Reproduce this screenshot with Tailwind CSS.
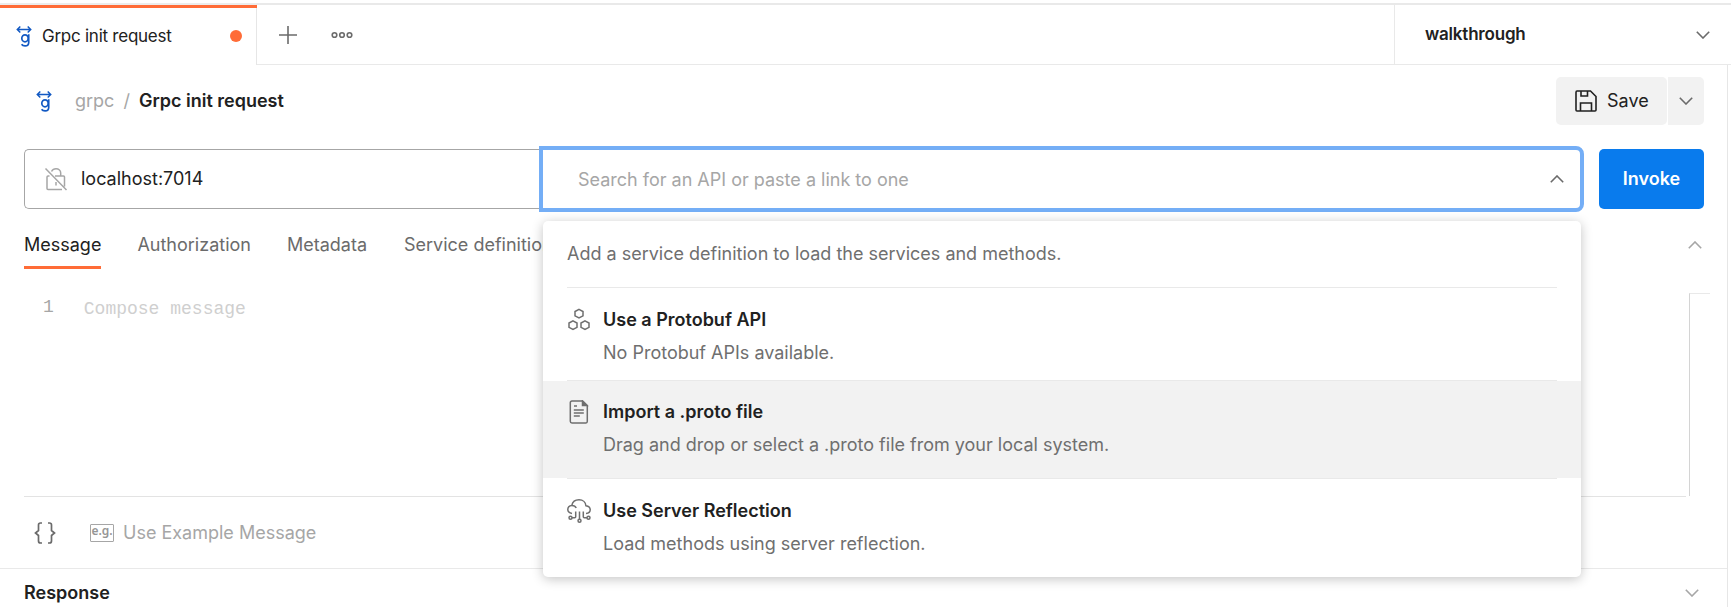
<!DOCTYPE html>
<html lang="en">
<head>
<meta charset="utf-8">
<title>Grpc init request</title>
<script src="https://cdn.jsdelivr.net/npm/@tailwindcss/browser@4"></script>
</head>
<body class="bg-white font-['Inter',sans-serif] text-[18px] leading-6 text-[#212121]">
<svg class="hidden">
  <symbol id="grpc" viewBox="0 0 16 22" fill="none" stroke="#1259c3"><path stroke-width="1.500" d="M1.600 4.500h12.800M4.300 1.500l-3 3 3 3M11.700 1.500l3 3-3 3"/><ellipse cx="9" cy="13.300" rx="3.200" ry="3.500" stroke-width="1.700"/><path stroke-width="1.700" d="M12.700 9.200v8.300c0 2.300-1.300 3.400-3.600 3.400-1.600 0-2.800-.5-3.500-1.700"/></symbol>
  <symbol id="down" viewBox="0 0 14 8" fill="none" stroke="currentColor" stroke-width="1.600"><path d="M.8.8L7 7 13.200.8"/></symbol>
  <symbol id="up" viewBox="0 0 14 8" fill="none" stroke="currentColor" stroke-width="1.600"><path d="M.8 7.200L7 1l6.200 6.200"/></symbol>
</svg>
<div class="relative flex h-[607px] w-[1731px] flex-col overflow-hidden">
  <header class="flex h-[65px] shrink-0 pt-[3px]">
    <div class="flex w-[257px] flex-col border-t-2 border-r border-t-[#ececec] border-r-[#e6e6e6]">
      <div class="-mr-px h-[3px] shrink-0 bg-[#ff6c37]"></div>
      <div class="flex flex-1 items-center pr-[14px] pb-[1px] pl-4">
        <svg class="h-[22px] w-4"><use href="#grpc"/></svg>
        <span class="ml-[10px] text-[17px] tracking-[-0.25px]">Grpc init request</span>
        <span class="ml-auto size-3 rounded-full bg-[#ff6c37]"></span>
      </div>
    </div>
    <div class="flex flex-1 items-center border-t-2 border-b border-[#e9e9e9] pl-[22px] text-[#6b6b6b]">
      <svg class="size-[18px]" viewBox="0 0 18 18" stroke="currentColor" stroke-width="1.600"><path d="M9 0v18M0 9h18"/></svg>
      <svg class="ml-[34px] h-2 w-[22px]" viewBox="0 0 22 8" fill="none" stroke="currentColor" stroke-width="1.600"><circle cx="3.500" cy="4" r="2.300"/><circle cx="11" cy="4" r="2.300"/><circle cx="18.500" cy="4" r="2.300"/></svg>
    </div>
    <div class="flex w-[337px] items-center border-t-2 border-b border-l border-[#e9e9e9] pr-[21px] pl-[30px]">
      <span class="pb-0.5 text-[17px] font-semibold tracking-[-0.2px]">walkthrough</span>
      <svg class="ml-auto h-2 w-[14px] text-[#6b6b6b]"><use href="#down"/></svg>
    </div>
  </header>
  <main class="flex w-[1728px] flex-1 flex-col border-r border-[#e6e6e6]">
    <div class="flex h-[72px] shrink-0 items-center pr-[23px] pl-9">
      <svg class="h-[22px] w-4"><use href="#grpc"/></svg>
      <span class="ml-[23px] text-[#a6a6a6]">grpc</span>
      <span class="ml-[9px] text-[#a6a6a6]">/</span>
      <span class="ml-[9px] font-semibold">Grpc init request</span>
      <div class="ml-auto flex h-12 gap-px">
        <button class="flex w-[111px] items-center rounded-[5px] bg-[#f2f2f2] pl-[19px]">
          <svg class="size-[22px]" viewBox="0 0 22 22" fill="none" stroke="#212121" stroke-width="1.600"><path d="M1 2.500V20q0 1 1 1h18q1 0 1-1V6.500L15.500 1H2Q1 1 1 2.500zM5.500 21v-8h11v8M6 1v5h6.500V1"/></svg>
          <span class="ml-[10px]">Save</span>
        </button>
        <button class="flex w-9 items-center justify-center rounded-r-[5px] bg-[#f2f2f2] text-[#6b6b6b]"><svg class="h-2 w-[14px]"><use href="#down"/></svg></button>
      </div>
    </div>
    <div class="flex h-[84px] shrink-0 items-center justify-between pr-[23px] pl-6">
      <div class="flex h-[60px] w-[516px] items-center rounded-l-[5px] border border-r-0 border-[#a6a6a6] pl-[19px]">
        <svg class="h-6 w-[24px]" viewBox="0 0 24 24" fill="none" stroke="#a6a6a6" stroke-width="1.500"><path d="M5.500 9H4Q3 9 3 10v11.500q0 1 1 1h14M11 9h8.500q1 0 1 1v9.500M7.500 4.500C8.500 2.600 10 1.700 12 1.700c2.800 0 4.700 2 4.700 4.300v3M1.500 1.500l21 21.500M12 15v3.500"/></svg>
        <span class="ml-[13px]">localhost:7014</span>
      </div>
      <div class="-ml-px mr-auto flex h-[66px] w-[1045px] items-center rounded-r-[8px] border-4 border-[#74aef6] pr-[16px] pl-[35px] text-[#a6a6a6]">
        <span class="pt-0.5">Search for an API or paste a link to one</span>
        <svg class="ml-auto h-2 w-[14px] text-[#6b6b6b]"><use href="#up"/></svg>
      </div>
      <button class="h-[60px] w-[105px] rounded-[5px] bg-[#097bed] font-semibold text-white">Invoke</button>
    </div>
    <nav class="flex h-[48px] shrink-0 items-stretch gap-9 pr-[25px] pl-6 text-[#6b6b6b]">
      <span class="h-12 border-b-[3px] border-[#ff6c37] pt-[12px] text-[#212121]">Message</span>
      <span class="pt-[12px]">Authorization</span>
      <span class="pt-[12px]">Metadata</span>
      <span class="ml-px pt-[12px]">Service definition</span>
      <svg class="mt-5 ml-auto h-2 w-[14px] text-[#a6a6a6]"><use href="#up"/></svg>
    </nav>
    <div class="ml-6 flex h-[228px] w-[1686px] shrink-0 pt-6 font-['Liberation_Mono',monospace]">
      <div class="flex w-[1662px] border-b border-[#e3e3e3] pt-[2px]">
        <span class="ml-[19px] text-[#a6a6a6]">1</span>
        <span class="ml-[30px] pt-0.5 text-[#cfcfcf]">Compose message</span>
      </div>
      <div class="ml-[3px] h-[203px] w-[21px] border-t border-l border-t-[#e9e9e9] border-l-[#d4d4d4]"></div>
    </div>
    <div class="flex h-[72px] shrink-0 items-center border-b border-[#e9e9e9] pl-[34px] text-[#a6a6a6]">
      <svg class="h-[22px] w-[22px]" viewBox="0 0 22 22" fill="none" stroke="#6b6b6b" stroke-width="1.700"><path d="M8 1H6.500Q4.500 1 4.500 3v5.500L1.500 11l3 2.500V19q0 2 2 2H8M14 1h1.500q2 0 2 2v5.500l3 2.500-3 2.500V19q0 2-2 2H14"/></svg>
      <span class="ml-[34px] flex h-[18px] w-6 items-center justify-center rounded-[1px] border border-[#a6a6a6] pb-[3px] font-['Noto_Sans',sans-serif] text-[12px] font-semibold text-[#969696]">e.g.</span>
      <span class="ml-[9px]">Use Example Message</span>
    </div>
    <div class="flex h-[48px] shrink-0 items-center pr-[28px] pl-6">
      <span class="font-semibold">Response</span>
      <svg class="ml-auto h-2 w-[14px] text-[#a6a6a6]"><use href="#down"/></svg>
    </div>
  </main>
  <div class="absolute top-[221px] left-[543px] flex h-[356px] w-[1038px] flex-col rounded-[5px] bg-white text-[#6f6f6f] shadow-[0_2px_12px_rgba(0,0,0,0.24)]">
    <div class="mx-6 h-[67px] border-b border-[#e9e9e9] pt-[21px]"><p>Add a service definition to load the services and methods.</p></div>
    <div class="mx-6 flex h-[93px] border-b border-[#e9e9e9] pt-5">
      <svg class="h-6 w-6" viewBox="0 0 24 24" fill="none" stroke="currentColor" stroke-width="1.500"><path id="hex" d="M12 1.300l4 2.200v4.300l-4 2.200-4-2.200V3.500z"/><use href="#hex" x="-6" y="11.500"/><use href="#hex" x="6" y="11.500"/></svg>
      <div class="ml-3"><h3 class="font-semibold text-[#212121]">Use a Protobuf API</h3><p class="mt-[9px]">No Protobuf APIs available.</p></div>
    </div>
    <div class="flex h-[97px] bg-[#f2f2f2] px-6 pt-[19px]">
      <svg class="h-6 w-6" viewBox="0 0 24 24" fill="none" stroke="currentColor" stroke-width="1.500"><path d="M15.500 1H5Q3.300 1 3.300 2.700v18.600Q3.300 23 5 23h14q1.300 0 1.300-1.700V5.500zM6.800 10h10M6.800 13h10M6.800 16h6M7 6h3"/><path fill="currentColor" d="M15.500 1v4.500h4.500z"/></svg>
      <div class="ml-3"><h3 class="font-semibold text-[#212121]">Import a .proto file</h3><p class="mt-[9px]">Drag and drop or select a .proto file from your local system.</p></div>
    </div>
    <div class="mx-6 flex flex-1 border-t border-[#e9e9e9] pt-5">
      <svg class="h-6 w-6" viewBox="0 0 24 24" fill="none" stroke="currentColor" stroke-width="1.500"><path d="M5 14.500C2.500 14 .8 12.600.8 10.500c0-2.200 1.600-3.700 4-4C5.500 3 8.500.8 12 .8c4 0 6.700 2.500 6.900 5.900 2.800.4 4.300 2 4.300 4.100 0 2-1.600 3.500-4.200 3.700M4.900 6.500c2 0 3.600.8 4.300 2.600M12.500 12.500v7.500M8.700 12.500v5.200q0 1-1 1H5M16.300 12.500v5.200q0 1 1 1H20"/><circle cx="3.500" cy="18.700" r="1.500"/><circle cx="21.500" cy="18.700" r="1.500"/><circle cx="12.500" cy="21.700" r="1.500"/></svg>
      <div class="ml-3"><h3 class="font-semibold text-[#212121]">Use Server Reflection</h3><p class="mt-[9px]">Load methods using server reflection.</p></div>
    </div>
  </div>
</div>
</body>
</html>
